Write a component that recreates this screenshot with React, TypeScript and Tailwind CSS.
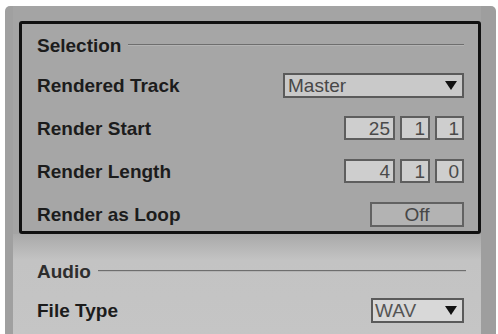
import React from "react";

const font = { fontFamily: '"Liberation Sans", Arial, sans-serif' };

function Arrow() {
  return (
    <svg width="12" height="9" viewBox="0 0 12 9" className="shrink-0">
      <path d="M0 0 H12 L6 9 Z" fill="#111" />
    </svg>
  );
}

function Header({ label, dim }: { label: string; dim?: boolean }) {
  return (
    <div className="flex h-[24px] items-center">
      <span className={`text-[19px] font-bold leading-none ${dim ? "text-[#2e2e2e]" : "text-[#1c1c1c]"}`}>{label}</span>
      <div className="ml-[7px] h-[2px] flex-1 border-t border-[#6e6e6e] border-b-[#b4b4b4] border-b" />
    </div>
  );
}

function Row({ label, children }: { label: string; children: React.ReactNode }) {
  return (
    <div className="flex h-[26px] items-center justify-between">
      <span className="text-[19px] font-bold leading-none text-[#1c1c1c]">{label}</span>
      <div className="flex items-center">{children}</div>
    </div>
  );
}

function NumBox({ value, w }: { value: string; w: string }) {
  return (
    <div className={`flex h-[24px] ${w} items-center justify-end border-2 border-[#5e5e5e] bg-[#cecece] pr-[3px] text-[19px] leading-none text-[#4a4a4a]`}>
      {value}
    </div>
  );
}

export default function App() {
  return (
    <div className="h-[334px] w-[498px] overflow-hidden bg-white pl-[5px] pr-[2px] pt-[6px]" style={font}>
      <div className="flex h-[328px] overflow-hidden rounded-t-[5px]">
        <div className="w-[8px] bg-[#a0a0a0]" />
        <div className="flex flex-1 flex-col">
          <div className="bg-[#a4a4a4] pl-[6px] pt-[15px]">
            <div className="flex h-[213px] flex-col rounded-[3px] border-[3px] border-[#111] bg-[#a6a6a6] pl-[15px] pr-[14px] pt-[9px]">
              <Header label="Selection" />
              <div className="mt-[15px] flex flex-col gap-[17px]">
                <Row label="Rendered Track">
                  <div className="flex h-[25px] w-[181px] items-center justify-between border-2 border-[#5a5a5a] bg-[#c9c9c9] pl-[3px] pr-[5px] text-[19px] leading-none text-[#474747]">
                    <span>Master</span>
                    <Arrow />
                  </div>
                </Row>
                <Row label="Render Start">
                  <div className="flex gap-[5px]">
                    <NumBox value="25" w="w-[51px]" />
                    <NumBox value="1" w="w-[30px]" />
                    <NumBox value="1" w="w-[29px]" />
                  </div>
                </Row>
                <Row label="Render Length">
                  <div className="flex gap-[5px]">
                    <NumBox value="4" w="w-[51px]" />
                    <NumBox value="1" w="w-[30px]" />
                    <NumBox value="0" w="w-[29px]" />
                  </div>
                </Row>
                <Row label="Render as Loop">
                  <div className="flex h-[25px] w-[94px] items-center justify-center border-2 border-[#626262] bg-[#b3b3b3] text-[19px] leading-none text-[#474747]">
                    Off
                  </div>
                </Row>
              </div>
            </div>
          </div>
          <div className="flex-1 bg-[linear-gradient(to_bottom,#a9a9a9,#c3c3c3_26px,#c5c5c5)] pl-[24px] pr-[15px] pt-[25px]">
            <Header label="Audio" dim />
            <div className="mt-[14px]">
              <Row label="File Type">
                <div className="mr-[2px] flex h-[25px] w-[93px] items-center justify-between border-2 border-[#5a5a5a] bg-[#d8d8d8] pl-[2px] pr-[5px] text-[19px] leading-none text-[#555]">
                  <span>WAV</span>
                  <Arrow />
                </div>
              </Row>
            </div>
          </div>
        </div>
        <div className="w-[15px] bg-[#9e9e9e]" />
      </div>
    </div>
  );
}
